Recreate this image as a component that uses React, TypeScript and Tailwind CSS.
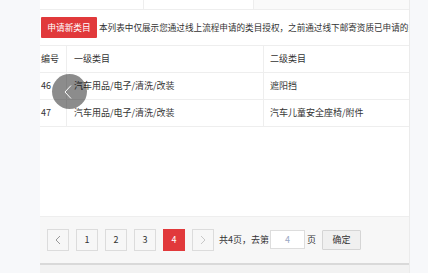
import React from 'react';

const rows = [
  { id: '46', first: '汽车用品/电子/清洗/改装', second: '遮阳挡' },
  { id: '47', first: '汽车用品/电子/清洗/改装', second: '汽车儿童安全座椅/附件' },
];

function Chevron({ dir, color }: { dir: 'left' | 'right'; color: string }) {
  return (
    <svg width="6" height="10" viewBox="0 0 6 10" fill="none">
      <path d={dir === 'left' ? 'M5 1 L1 5 L5 9' : 'M1 1 L5 5 L1 9'} stroke={color} strokeWidth="1" />
    </svg>
  );
}

export default function App() {
  const pageBtn = 'w-[22px] h-[22px] flex items-center justify-center border border-[#dcdcdc] bg-[#f7f7f7] text-[9px] text-[#333]';
  return (
    <div className="w-[428px] h-[273px] bg-[#f7f8fa] flex overflow-hidden font-['Noto_Sans_CJK_SC',sans-serif] text-[9px] text-[#333]">
      <div className="w-[40px] shrink-0" />
      <div className="relative w-[370px] shrink-0 bg-white border-r border-[#ebebeb] flex flex-col">
        {/* tabs strip */}
        <div className="h-[10px] flex border-b border-[#eeeeee]">
          <div className="w-[103px]" />
          <div className="w-[110px] border-l border-[#eeeeee]" />
          <div className="flex-1 border-l border-[#eeeeee] bg-[#fafafa]" />
        </div>

        {/* action bar */}
        <div className="h-[36px] flex items-center pl-[1px] border-b border-[#eeeeee] overflow-hidden">
          <button className="shrink-0 w-[56px] h-[21px] bg-[#e1393b] text-white text-[8.7px] rounded-[1px]">申请新类目</button>
          <span className="ml-[2px] whitespace-nowrap text-[8.6px]">本列表中仅展示您通过线上流程申请的类目授权，之前通过线下邮寄资质已申请的类目</span>
        </div>

        {/* table */}
        <div className="h-[27px] flex border-b border-[#eeeeee]">
          <div className="w-[27px] flex items-center pl-[1px] border-r border-[#eeeeee]">编号</div>
          <div className="w-[197px] flex items-center pl-[7px] border-r border-[#eeeeee]">一级类目</div>
          <div className="flex-1 flex items-center pl-[6px]">二级类目</div>
        </div>
        {rows.map((r) => (
          <div key={r.id} className="h-[27px] flex border-b border-[#eeeeee]">
            <div className="w-[27px] flex items-center pl-[1px] border-r border-[#eeeeee]">{r.id}</div>
            <div className="w-[197px] flex items-center pl-[7px] border-r border-[#eeeeee]">{r.first}</div>
            <div className="flex-1 flex items-center pl-[6px]">{r.second}</div>
          </div>
        ))}

        <div className="flex-1" />

        {/* pagination */}
        <div className="h-[47px] border-t border-[#eeeeee] bg-[#f7f7f7] flex items-center pl-[7px] pb-[1px]">
          <div className="flex items-center gap-[7px]">
            <div className={pageBtn}><Chevron dir="left" color="#999" /></div>
            <div className={pageBtn}>1</div>
            <div className={pageBtn}>2</div>
            <div className={pageBtn}>3</div>
            <div className="w-[22px] h-[22px] flex items-center justify-center bg-[#e1393b] text-white text-[9px]">4</div>
            <div className={pageBtn}><Chevron dir="right" color="#c8c8c8" /></div>
          </div>
          <span className="ml-[5px] whitespace-nowrap">共4页，去第</span>
          <div className="ml-[1px] w-[35px] h-[19px] bg-white border border-[#dddddd] flex items-center justify-center text-[#9aa8c4]">4</div>
          <span className="ml-[2px]">页</span>
          <button className="ml-[6px] w-[39px] h-[20px] bg-[#f0f0f0] border border-[#d5d5d5] rounded-[1px] text-[9px] text-[#333]">确定</button>
        </div>
        <div className="h-[2px] bg-[#d9d9d9]" />
        <div className="h-[8px] bg-[#f2f2f2]" />

        {/* floating back button */}
        <div className="absolute left-[12px] top-[74px] w-[35px] h-[35px] rounded-full bg-black/45 flex items-center justify-center">
          <svg width="10" height="16" viewBox="0 0 10 16" fill="none" className="-ml-[3px]">
            <path d="M8 1.5 L2 8 L8 14.5" stroke="white" strokeWidth="1" />
          </svg>
        </div>
      </div>
    </div>
  );
}
